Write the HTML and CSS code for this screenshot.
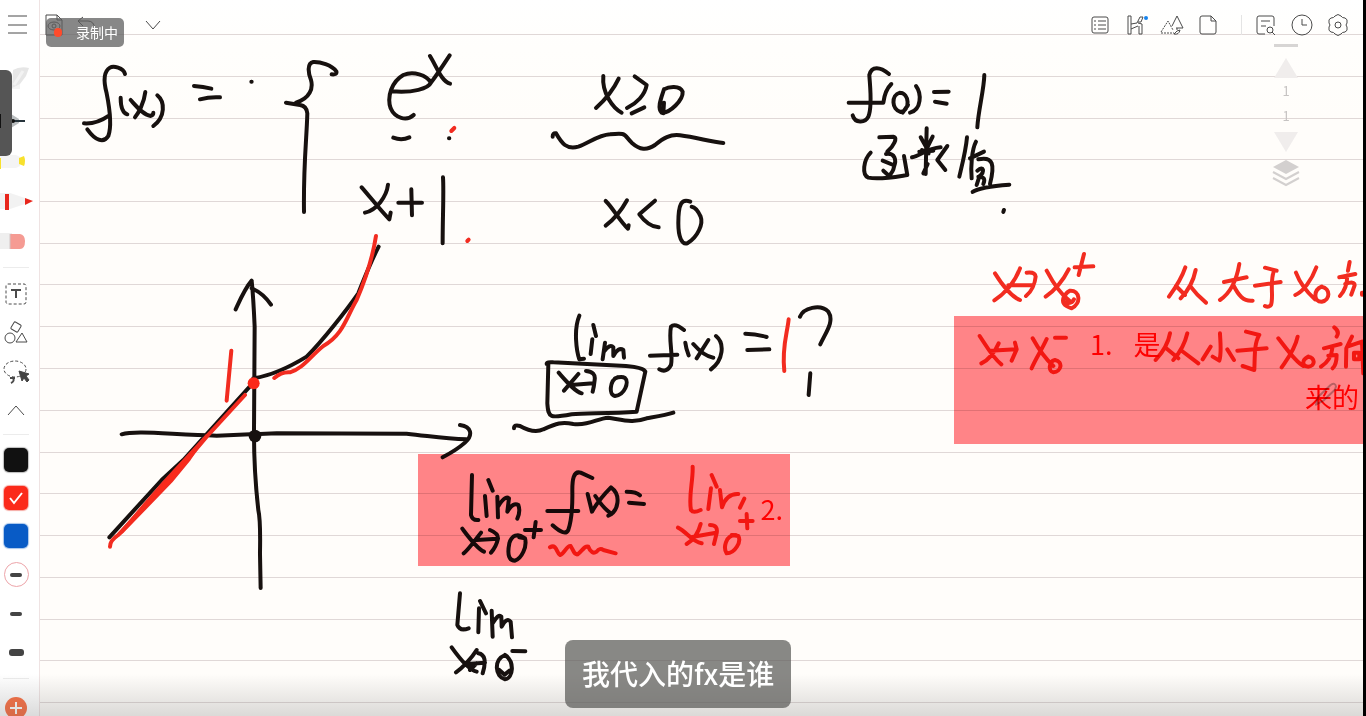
FILE: index.html
```html
<!DOCTYPE html>
<html lang="zh-CN">
<head>
<meta charset="utf-8">
<title>函数极限</title>
<link rel="stylesheet" href="styles.css">
</head>
<body>
<div class="app">
  <svg class="board" aria-hidden="true">
    <g class="rules">
      <line x1="40" x2="100%" y1="34" y2="34"/><line x1="40" x2="100%" y1="76" y2="76"/><line x1="40" x2="100%" y1="118" y2="118"/><line x1="40" x2="100%" y1="159" y2="159"/><line x1="40" x2="100%" y1="201" y2="201"/><line x1="40" x2="100%" y1="243" y2="243"/><line x1="40" x2="100%" y1="284" y2="284"/><line x1="40" x2="100%" y1="326" y2="326"/><line x1="40" x2="100%" y1="368" y2="368"/><line x1="40" x2="100%" y1="410" y2="410"/><line x1="40" x2="100%" y1="452" y2="452"/><line x1="40" x2="100%" y1="493" y2="493"/><line x1="40" x2="100%" y1="535" y2="535"/><line x1="40" x2="100%" y1="577" y2="577"/><line x1="40" x2="100%" y1="619" y2="619"/><line x1="40" x2="100%" y1="660" y2="660"/><line x1="40" x2="100%" y1="702" y2="702"/>
    </g>
    <g class="ink" transform="scale(.3333)">
      <path d="M375 222C370 203 340 197 330 203C310 215 312 250 320 280C330 330 335 380 325 408C310 432 285 420 262 388M252 370C280 372 305 362 328 346M362 293C362 320 366 338 382 343M392 300C410 320 430 345 452 348Q460 345 460 338M436 276C432 310 415 340 405 352M472 286C495 305 497 350 460 378M582 258Q610 260 634 266M600 298Q630 290 660 292"/>
    </g>
    <g class="ink" transform="translate(240 30) scale(.3333)">
      <path d="M34 155h1M275 133Q292 135 289 124C275 105 240 95 220 96C200 100 205 130 213 150C220 175 210 205 168 218M138 218L180 225Q200 228 202 250C200 330 190 400 192 546M455 184C520 190 565 175 573 158C560 135 520 122 490 135C455 155 440 200 452 235C465 265 500 275 521 255M570 78C590 110 605 155 630 161M629 76C610 105 590 135 573 158M460 323Q485 333 508 322M627 325h1M365 472C390 500 420 540 448 568L452 548M444 464C440 500 410 540 375 548M475 518H546M514 478L516 556M609 442C612 480 608 560 608 640"/>
      <path class="red" d="M634 303L643 294M682 633L686 629"/>
    </g>
    <g class="ink" transform="translate(530 50) scale(.3333)">
      <path d="M220 78C215 130 250 175 275 188M266 86C250 120 225 150 198 174M314 79L350 105C345 135 320 160 291 174M305 190L343 172M402 118C395 140 380 175 395 188C420 190 460 150 458 125C450 105 415 110 402 118M402 158L400 190M68 260Q68 248 78 250C95 280 110 300 145 290C175 280 205 255 240 253C290 248 280 252 305 278C330 300 350 302 375 285C400 265 420 252 450 256C500 262 540 275 580 279M227 453C250 475 270 515 294 536L296 526M291 451C275 480 250 510 227 527M375 452L328 493Q355 530 386 532M481 455C455 445 445 460 445 520C445 560 455 585 472 580C505 560 520 520 512 500Q500 472 485 470"/>
    </g>
    <g class="ink" transform="translate(830 50) scale(.3333)">
      <path d="M177 72C150 50 125 48 118 75C120 110 128 170 115 200C105 220 75 220 68 196M56 158H160Q165 120 184 102M210 128C182 135 185 180 212 186C242 180 238 130 210 128M218 188L234 165M258 108C275 130 275 180 240 188M312 126L356 125M315 155L350 161M463 75C462 120 445 180 442 232M148 262L190 260C205 262 190 290 172 305M122 308C100 330 95 375 115 383C150 390 200 380 232 375L222 318M168 312C195 308 200 330 192 350Q190 365 176 378M158 332L190 345M160 362L180 380M290 235L287 372M246 322C270 318 290 295 332 292M272 262L288 290M308 260L288 300M268 305L310 302M276 300L296 310M280 370L293 342M352 288L322 330L346 360M411 262C408 300 395 350 388 380M438 275C425 300 422 350 425 385M420 325L462 305M445 328C490 318 495 345 480 402M442 362C462 345 465 365 448 380L440 405M445 380Q470 380 460 402M428 426Q450 410 538 404M520 486L522 480"/>
    </g>
    <g class="ink red" transform="translate(940 240) scale(.3333)">
      <path d="M165 100C190 140 215 170 240 180M240 85C225 125 195 160 163 181M205 136H278M260 98Q285 95 287 110C285 130 275 155 258 168M320 92C340 130 365 165 388 182M386 88C370 120 345 150 317 170M372 170Q360 195 395 205C425 190 420 150 390 152Q372 160 370 185Q395 195 402 178M404 82L460 79M432 42L416 105M736 82C725 115 705 145 687 170M708 138L735 165M767 90C760 125 742 155 722 175M752 140Q770 165 798 188M852 126L920 112M898 72C890 120 870 160 840 180M880 135C895 165 910 185 938 182M975 83L1010 92M945 137L1022 126M1002 92C988 130 1002 170 993 195Q985 204 975 198M1068 98C1080 130 1105 160 1125 178M1129 82C1115 120 1090 155 1066 165M1145 140C1120 150 1120 185 1145 185C1172 180 1172 145 1145 140M1229 66L1224 92M1198 112L1246 102M1222 106C1222 135 1212 155 1200 168M1216 132Q1244 122 1244 136L1234 164M1266 158V164"/>
      <path d="M119 288C140 320 160 355 184 373M176 310C165 335 145 360 124 370M150 332L228 328M225 308L230 328L215 362M278 295C300 335 320 360 340 378M320 297C305 330 285 360 275 385M345 360C325 365 325 395 340 397C365 395 370 365 345 360M345 293H378M690 280C685 310 665 340 647 360M675 322L715 355M742 280C735 310 718 340 700 360M722 330L775 370M840 280C842 320 845 340 838 362L818 350M812 320L788 358M862 328L882 360M918 275L958 285M892 332L980 325M958 285C942 310 945 350 943 390L908 378M1015 295C1035 320 1065 365 1090 378M1073 290C1065 330 1040 360 1025 382M1105 350C1085 360 1085 378 1105 380C1128 378 1125 352 1105 350M1183 262Q1200 275 1190 290M1152 325L1202 312M1178 320C1175 350 1160 370 1143 380M1165 347L1190 345Q1190 375 1178 385M1236 290L1219 325L1218 380M1222 320L1266 305L1270 400M1242 338H1258V358H1242Z"/>
      <path class="pencil" d="M1128 494L1135 470L1172 435Q1186 426 1188 440Q1187 448 1180 454L1150 482Z"/>
    </g>
    <g class="ink" transform="translate(410 440) scale(.3333)">
      <path d="M186 105L183 225Q187 242 205 240M235 120L248 152M225 168L230 228M262 170L264 232M264 200Q285 165 297 175L292 215Q310 185 325 195Q332 215 322 236M157 266C175 290 200 325 222 335M213 278C195 300 175 330 161 340M200 300L262 296M240 270Q265 280 264 296C260 315 250 330 243 338M340 292C325 280 305 285 298 310C290 350 300 362 315 362C335 355 352 320 345 295L328 292M345 270H393M377 246L371 292M547 114L512 98C490 92 487 120 487 150C488 200 485 240 475 270Q465 290 428 256M412 213H505M533 162L546 215C560 190 590 155 603 142C635 165 625 215 595 227M556 168Q580 205 605 222M650 155Q680 155 690 166M657 188L702 192M150 460L142 555Q150 575 176 565M210 483L228 520M207 505L205 577M245 512L248 590M248 550Q265 520 274 530L275 560Q290 530 302 545L306 592M125 622C145 650 175 690 200 695M200 630C185 655 155 685 138 697M170 672L225 668M205 640Q235 645 218 700M180 690L200 670M285 645C250 660 255 710 285 718C310 715 315 665 285 645M268 690L284 704L298 692"/>
      <path d="M307 633L346 634"/>
      <path class="red" d="M420 322C440 310 440 340 450 345C465 340 470 315 482 318C490 330 492 345 503 343C515 335 525 315 535 320Q545 345 560 335Q570 322 580 330L617 340M848 80C850 120 835 170 843 210Q850 220 872 210M905 105L920 140M903 145L895 207M930 150L936 202Q950 160 985 162M1003 176L990 203M804 263C830 275 845 305 875 310M872 252C865 280 850 300 830 312M850 290L918 278M900 255Q925 255 920 280L912 312M978 285C945 285 940 325 950 340C975 340 995 305 985 288L965 285M990 243H1028M1010 222L1012 265"/>
    </g>
    <g class="ink" transform="translate(500 290) scale(.3333)">
      <path d="M238 77C220 120 230 185 238 208L252 206M280 105L288 138M277 148L272 192M315 158L308 208M312 185Q330 160 340 172L340 198Q355 170 370 180L372 203M140 222Q140 215 160 217L378 228Q430 232 436 245L410 365C330 370 260 370 215 373C150 385 145 385 142 340L145 222M176 248C200 275 225 305 245 310M235 252L192 302M222 284L280 280M258 243Q288 245 284 270Q282 290 278 305M352 262C330 270 325 315 345 318C375 315 388 275 375 264Q365 258 345 265M42 415Q42 403 60 408C90 425 110 428 130 418C170 400 185 395 220 402C270 408 290 385 325 383C370 390 400 400 440 385C480 378 500 375 520 368M552 120Q525 98 513 110C505 150 520 190 513 225Q500 250 478 238M450 197L532 194M556 158Q558 175 566 196M580 162C600 185 620 200 640 203M625 150L590 205M648 138C675 160 670 210 633 238M736 131Q770 132 800 141M742 180L808 178M900 80C910 55 960 40 985 65C1005 95 975 130 961 163M931 250L926 315"/>
      <path class="red" d="M866 88C862 130 845 170 853 243"/>
    </g>
    <g class="ink" transform="translate(90 220) scale(.3333)">
      <path d="M485 182Q490 230 494 320L492 640C492 700 497 800 505 870Q512 900 510 1000L512 1104M437 268C450 240 465 205 485 182M485 205C510 215 530 235 543 254M95 643C140 630 250 645 380 647L560 640L950 641C1020 648 1060 657 1130 658M1110 615C1145 620 1150 645 1125 668Q1100 690 1058 712M58 952L215 780L280 720L488 490M490 475Q560 465 650 410C700 360 770 270 805 220C825 170 840 130 866 80"/>
      <circle class="dot" cx="495" cy="648" r="19"/>
      <path class="red" d="M60 980Q60 962 85 945L270 745L350 650L465 525M553 474Q575 455 600 457C640 445 660 410 700 378C760 345 770 290 800 240C830 170 850 100 858 48M424 392L410 542"/>
      <path class="red wash" d="M75 955L160 855L220 786L350 645L300 718L245 785L100 935Z"/>
      <circle class="dot red-dot" cx="491" cy="490" r="18"/>
    </g>
  </svg>

  <aside class="sidebar">
    <div class="pens">
      <button class="pen" aria-label="毛笔"><svg width="40" height="40"><path d="M12 28V20H13L20 15V28Z" fill="#f4f4f4"/><path d="M13 9Q20 5 29 7L26 15L20 23L12 27Z" fill="#e6e6e6"/><path d="M14 24L23 10" stroke="#f2f2f2" stroke-width="3"/></svg></button>
      <button class="pen" aria-label="钢笔"><svg width="40" height="40"><path d="M11 13L19 18V22L11 27Z" fill="#b9bdbf"/><path d="M12 20H25" stroke="#27343b" stroke-width="2"/><circle cx="13" cy="20" r="2" fill="#111"/></svg></button>
      <button class="pen" aria-label="荧光笔"><svg width="40" height="40"><path d="M0 14H16L20 16V25L16 27H0Z" fill="#f4f4f4"/><path d="M0 17H1V28H0Z" fill="#f8e12d"/><path d="M19 17L24 15Q26 20 24 25L19 23Z" fill="#f8e12d"/></svg></button>
      <button class="pen" aria-label="红笔"><svg width="40" height="40"><path d="M0 12H10L25 17V23L10 28H0Z" fill="#f2f2f2"/><path d="M5 13H9V29H5Z" fill="#e8261c"/><path d="M25 17L33 20L25 24Z" fill="#e8261c"/></svg></button>
      <button class="pen" aria-label="橡皮"><svg width="40" height="40"><path d="M0 12H12V28H0Z" fill="#efefef"/><path d="M10 13H20Q25 14 25 20Q25 28 20 28H10Z" fill="#f59b93"/><path d="M10 13V28" stroke="#d3c5c5"/></svg></button>
    </div>
    <hr>
    <div class="tools">
      <button aria-label="文本"><svg width="32" height="32"><rect x="6" y="6" width="20" height="20" rx="2" stroke-dasharray="3 2"/><path d="M12 13V12H20V13M16 12V20" stroke-width="2"/></svg></button>
      <button aria-label="图形"><svg width="32" height="32"><rect x="12" y="6" width="8" height="8" rx="1" transform="rotate(30 16 10)"/><circle cx="10" cy="21" r="5"/><path d="M22 16L27 25H16Z"/></svg></button>
      <button aria-label="套索"><svg width="32" height="32"><ellipse cx="15" cy="13" rx="11" ry="8" stroke-dasharray="3 2"/><path d="M10 22H15M13 22Q15 25 11 27" stroke-width="2"/><path d="M19 15L29 18L26 20L29 24L27 26L24 22L22 25Z" fill="#444" stroke="#444"/></svg></button>
      <button aria-label="收起"><svg width="32" height="32"><path d="M8 20L16 11L24 20"/></svg></button>
    </div>
    <hr>
    <div class="swatches">
      <button aria-label="黑色"><span class="swatch black"></span></button>
      <button aria-label="红色"><span class="swatch scarlet"><svg width="24" height="24"><path d="M6 12L10 17L18 7"/></svg></span></button>
      <button aria-label="蓝色"><span class="swatch blue"></span></button>
    </div>
    <div class="widths">
      <button aria-label="中"><span class="ring"><i class="bar"></i></span></button>
      <button aria-label="细"><i class="bar thin"></i></button>
      <button aria-label="粗"><i class="bar thick"></i></button>
    </div>
    <hr>
    <button class="add" aria-label="添加"><svg width="22" height="22"><circle cx="11" cy="11" r="11"/><path d="M5 11H17M11 5V17"/></svg></button>
  </aside>

  <header class="topbar">
    <button aria-label="菜单"><svg width="20" height="24"><path d="M0 3H19M0 12H19M0 20H19"/></svg></button>
    <div class="history">
      <button aria-label="预览"><svg width="18" height="24"><path d="M1 22V2H12L17 7V22H1M12 2V7H17"/><ellipse cx="9" cy="13" rx="6" ry="4"/><circle cx="9" cy="13" r="2"/></svg></button>
      <button aria-label="撤销"><svg width="20" height="24"><path d="M6 4L1 8L6 13M1 8H11Q17 8 18 16"/></svg></button>
      <div class="recording"><span class="lamp"></span><span>录制中</span></div>
    </div>
    <button class="expand" aria-label="展开"><svg width="16" height="10"><path d="M1 1L8 9L15 1"/></svg></button>
    <div class="actions">
      <button aria-label="列表"><svg width="24" height="24"><rect x="4" y="4" width="16" height="16" rx="2"/><path d="M10 8H18M10 12H18M10 16H18M6 8H8M6 12H8M6 16H8"/></svg></button>
      <button aria-label="书写"><svg width="24" height="24"><path d="M4 3H7V21H4ZM7 11L13 10L16 4H19L17 9H14M7 16L14 13M14 10L18 11V21H15V13"/><circle cx="22" cy="5" r="2" class="badge"/></svg></button>
      <button aria-label="形状识别"><svg width="24" height="24"><path d="M1 19L8 8L13 17M1 20H14" stroke-dasharray="2 1"/><path d="M12 13L17 3L23 15H16M17 15V17M14 21Q19 22 20 17L17 18Z"/></svg></button>
      <button aria-label="页面"><svg width="24" height="24"><path d="M6 3H15L20 8V19Q20 21 18 21H6Q4 21 4 19V5Q4 3 6 3ZM15 3V8H20"/></svg></button>
      <span class="sep"></span>
      <button aria-label="查找"><svg width="24" height="24"><path d="M12 21H6Q4 21 4 19V5Q4 3 6 3H19Q21 3 21 5V13M8 8H17M8 13H13"/><circle cx="17" cy="17" r="3"/><path d="M19 19L22 22"/></svg></button>
      <button aria-label="历史"><svg width="24" height="24"><circle cx="13" cy="12" r="10"/><path d="M13 6V12H18"/></svg></button>
      <button aria-label="设置"><svg width="24" height="24"><path d="M10 3Q13 0 16 3Q17 5 20 5Q23 6 22 10Q20 12 22 14Q23 18 20 19Q17 19 16 21Q13 24 10 21Q9 19 6 19Q3 18 4 14Q6 12 4 10Q3 6 6 5Q9 5 10 3Z"/><circle cx="13" cy="12" r="3"/></svg></button>
    </div>
  </header>

  <nav class="pager" aria-label="页面">
    <span class="handle"></span>
    <button aria-label="上一页"><svg width="26" height="20"><path d="M13 0L25 20H1Z"/></svg></button>
    <span class="num">1</span>
    <span class="num">1</span>
    <button aria-label="下一页"><svg width="26" height="20"><path d="M1 0H25L13 20Z"/></svg></button>
    <button aria-label="图层"><svg width="28" height="28"><path d="M14 1L27 8L14 15L1 8Z" fill="#d3d0cf"/><path d="M1 13L14 20L27 13M1 19L14 26L27 19" class="sheet"/></svg></button>
  </nav>

  <div class="mark mark-one"><p><span>1.</span><span>是</span></p><p class="tail">来的</p></div>
  <div class="mark mark-two">2.</div>
  <div class="drawer"></div>
  <div class="caption">我代入的fx是谁</div>
</div>
</body>
</html>
```
FILE: styles.css
```css
* { box-sizing: border-box; }
body {
  margin: 0;
  font-family: "Noto Sans CJK SC", "Noto Sans", sans-serif;
  background: #000;
}
button { padding: 0; border: 0; background: none; display: flex; align-items: center; justify-content: center; }
p { margin: 0; }
svg { display: block; fill: none; }

.app {
  position: relative;
  height: 100vh;
  overflow: hidden;
  background: linear-gradient(#fff 0, #fffefc 48px, #fffdfa 120px);
  border-right: 3px solid #000;
}
.app::after {
  content: "";
  position: absolute;
  inset: auto 0 0 0;
  height: 42px;
  background: linear-gradient(rgba(90, 90, 90, 0), rgba(90, 90, 90, .22));
}

.board { position: absolute; inset: 0; width: 100%; height: 100%; }
.rules line { stroke: #e0d8d7; stroke-width: 1; shape-rendering: crispEdges; }
.ink path { stroke: #17110f; stroke-width: 12; stroke-linecap: round; stroke-linejoin: round; }
.ink .red, .red path { stroke: #f22c20; }
.ink .wash { fill: #fb2a1a; stroke-width: 6; }
.ink .pencil { stroke: #888; stroke-width: 6; opacity: .6; }
.dot { fill: #17110f; }
.red-dot { fill: #fb2a1a; }

.sidebar {
  position: absolute;
  inset: 0 auto 0 0;
  width: 40px;
  padding-top: 61px;
  background: #fff;
  border-right: 1px solid #efe3e3;
}
.sidebar hr { width: 26px; height: 1px; margin: 6px 0 6px 3px; border: 0; background: #ececec; }
.pen { width: 39px; height: 40px; }
.tools button, .swatches button, .widths button { width: 32px; height: 39px; }
.tools svg { stroke: #4b4b4b; stroke-width: 1; }
.tools + hr { margin: 4px 0 6px 3px; }
.swatches button { height: 38px; }
.swatch { width: 24px; height: 24px; border-radius: 5px; box-shadow: 0 0 1px 1px #bbb; }
.swatch svg { stroke: #fff; stroke-width: 2; }
.black { background: #111; }
.scarlet { background: #fb2a1a; box-shadow: 0 0 1px 1px #f5a9a3; }
.blue { background: #085bc6; box-shadow: 0 0 1px 1px #a5c4ea; }
.ring { width: 25px; height: 25px; border: 1px solid #eda4a9; border-radius: 50%; display: grid; place-items: center; }
.bar { display: block; width: 12px; height: 4px; border-radius: 2px; background: #444; }
.thick { width: 15px; height: 7px; border-radius: 3px; }
.add { width: 32px; height: 46px; }
.add circle { fill: #fa7044; }
.add path { stroke: #fff; stroke-width: 2; }

.topbar { position: relative; display: flex; align-items: center; height: 50px; padding: 0 14px 0 8px; }
.topbar svg { stroke: #4a4a4a; stroke-width: 1; }
.topbar svg:hover { stroke: #111; }
.history { position: relative; display: flex; gap: 14px; margin-left: 17px; }
.recording {
  position: absolute;
  top: 5px;
  left: 1px;
  display: flex;
  align-items: center;
  gap: 14px;
  width: 78px;
  height: 29px;
  padding-left: 8px;
  border-radius: 5px;
  background: rgba(95, 95, 95, .75);
  color: #fff;
  font-size: 14px;
  line-height: 29px;
  white-space: nowrap;
}
.lamp { width: 8px; height: 9px; border-radius: 4px; background: #ff4b2b; }
.expand { margin-left: 48px; }
.actions { display: flex; align-items: center; gap: 12px; margin-left: auto; }
.badge { fill: #1684ee; stroke: none; }
.sep { width: 1px; height: 20px; margin: 0 -1px 0 9px; background: #e4e4e4; }

.pager { position: absolute; top: 44px; right: 63px; display: flex; flex-direction: column; align-items: center; width: 28px; }
.handle { width: 24px; height: 3px; margin-bottom: 11px; background: #d7d5d4; }
.pager svg { fill: #f0edec; }
.num { height: 25px; color: #c6c3c2; font-size: 13px; line-height: 25px; }
.pager button:nth-of-type(2) { margin-top: 4px; }
.pager button:last-child { margin-top: 7px; }
.pager .sheet { fill: none; stroke: #d3d0cf; stroke-width: 2; }

.mark {
  position: absolute;
  background: #ff858a;
  color: #f00;
  font-size: 27px;
  line-height: 53px;
  mix-blend-mode: multiply;
}
.mark-one { top: 316px; left: 954px; right: 0; height: 128px; padding: 1px 4px 0 136px; }
.mark-one p { display: flex; gap: 21px; }
.mark-one .tail { justify-content: flex-end; }
.mark-two { top: 454px; left: 418px; width: 372px; height: 112px; padding-right: 7px; line-height: 110px; text-align: right; }
.drawer { position: absolute; top: 70px; left: 0; width: 12px; height: 86px; border-radius: 0 6px 6px 0; background: #555; }
.drawer::before { content: ""; display: block; width: 1px; height: 14px; margin-top: 44px; background: #111; }
.caption {
  position: absolute;
  z-index: 1;
  bottom: 8px;
  left: 565px;
  height: 68px;
  padding: 0 17px;
  border-radius: 8px;
  background: rgba(90, 90, 88, .72);
  color: #fff;
  font-size: 28px;
  font-weight: 500;
  line-height: 66px;
  white-space: nowrap;
}
```
